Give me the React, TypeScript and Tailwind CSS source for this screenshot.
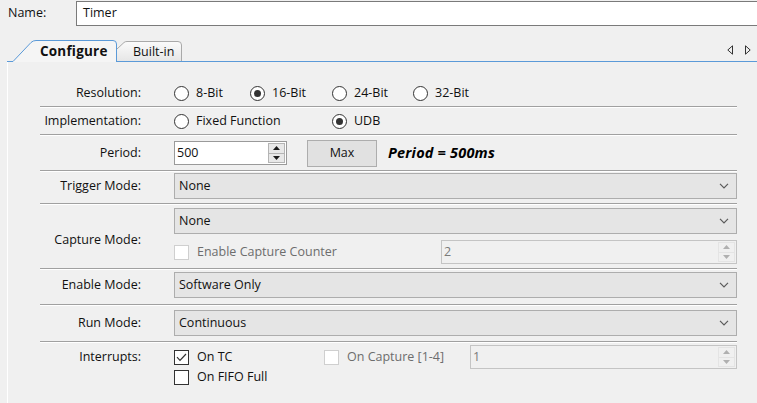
import type { ReactNode } from "react";

const Chevron = () => (
  <svg width="10" height="6" viewBox="0 0 10 6" className="shrink-0">
    <path d="M1 0.8 L5 4.8 L9 0.8" fill="none" stroke="#5a5a5a" strokeWidth="1.2" />
  </svg>
);

function Select({ value }: { value: string }) {
  return (
    <div className="flex h-[26px] w-full items-center justify-between border border-[#adadad] bg-[#e5e5e5] pl-[4px] pr-[7px]">
      <span>{value}</span>
      <Chevron />
    </div>
  );
}

function Radio({ checked, label, className = "" }: { checked?: boolean; label: string; className?: string }) {
  return (
    <div className={`flex items-center gap-[7px] ${className}`}>
      <span className="flex h-[15px] w-[15px] shrink-0 items-center justify-center rounded-full border border-[#333] bg-white">
        {checked && <span className="h-[7px] w-[7px] rounded-full bg-[#333]" />}
      </span>
      <span>{label}</span>
    </div>
  );
}

function Checkbox({ checked, disabled, label, className = "" }: { checked?: boolean; disabled?: boolean; label: string; className?: string }) {
  return (
    <div className={`flex items-center gap-[8px] ${className}`}>
      <span
        className={`flex h-[15px] w-[15px] shrink-0 items-center justify-center border bg-white ${
          disabled ? "border-[#cfcfcf]" : "border-[#333]"
        }`}
      >
        {checked && (
          <svg width="11" height="9" viewBox="0 0 11 9">
            <path d="M1 4.2 L4 7.3 L10 1" fill="none" stroke="#333" strokeWidth="1.2" />
          </svg>
        )}
      </span>
      <span className={disabled ? "text-[#6d6d6d]" : ""}>{label}</span>
    </div>
  );
}

function Spin({ disabled }: { disabled?: boolean }) {
  const fill = disabled ? "#b0b0b0" : "#1a1a1a";
  const box = disabled ? "border-[#e4e4e4] bg-[#f0f0f0]" : "border-[#b4b4b4] bg-[#e8e8e8]";
  return (
    <div className="flex h-full w-[17px] shrink-0 flex-col py-px">
      <div className={`flex flex-1 items-center justify-center border ${box}`}>
        <svg width="7" height="4" viewBox="0 0 7 4">
          <polygon points="0,4 3.5,0 7,4" fill={fill} />
        </svg>
      </div>
      <div className={`flex flex-1 items-center justify-center border border-t-0 ${box}`}>
        <svg width="7" height="4" viewBox="0 0 7 4">
          <polygon points="0,0 7,0 3.5,4" fill={fill} />
        </svg>
      </div>
    </div>
  );
}

function NumBox({ value, disabled, className = "" }: { value: string; disabled?: boolean; className?: string }) {
  return (
    <div
      className={`flex h-[24px] items-center justify-between border pl-[2px] pr-[1px] ${
        disabled ? "border-[#c4c4c4] bg-[#f0f0f0] text-[#7a7a7a]" : "border-[#9a9a9a] bg-white"
      } ${className}`}
    >
      <span>{value}</span>
      <Spin disabled={disabled} />
    </div>
  );
}

const Sep = () => <div className="h-0 border-t border-b border-t-[#a0a0a0] border-b-white" />;

function Row({ label, labelClass = "", className = "", children }: { label: string; labelClass?: string; className?: string; children: ReactNode }) {
  return (
    <div className={`flex ${className}`}>
      <div className={`flex w-[101px] shrink-0 items-center justify-end whitespace-nowrap ${labelClass}`}>{label}</div>
      <div className="ml-[33px] flex min-w-0 flex-1 flex-col">{children}</div>
    </div>
  );
}

export default function App() {
  return (
    <div className="h-[403px] w-[757px] overflow-hidden bg-[#f0f0f0] font-['Open_Sans',sans-serif] text-[12.5px] text-[#111]">
      {/* name */}
      <div className="flex h-[27px] items-center">
        <span className="w-[76px] shrink-0 pl-[8px]">Name:</span>
        <div className="flex h-[25px] flex-1 items-center border border-r-0 border-[#7a7a7a] bg-white pl-[6px]">Timer</div>
      </div>

      {/* tabs */}
      <div className="flex h-[35px] items-end">
        <div className="w-[7px] shrink-0" />
        <div className="relative flex h-[22px] w-[110px] shrink-0 items-center">
          <svg width="110" height="22" viewBox="0 0 110 22" className="absolute inset-0">
            <path d="M6 22 L24 2.5 Q26 0.5 29 0.5 L106 0.5 Q109.5 0.5 109.5 4 L109.5 22 Z" fill="#f5f5f5" />
            <path
              d="M0 21.5 L6 21.5 L24 2.5 Q26 0.5 29 0.5 L106 0.5 Q109.5 0.5 109.5 4 L109.5 22"
              fill="none"
              stroke="#5b9ad8"
            />
          </svg>
          <span className="relative ml-[33px] text-[13.5px] font-bold tracking-[0.2px]">Configure</span>
        </div>
        <div className="relative flex h-[22px] w-[65px] shrink-0 items-center">
          <svg width="65" height="22" viewBox="0 0 65 22" className="absolute inset-0">
            <defs>
              <linearGradient id="bt" x1="0" y1="0" x2="0" y2="1">
                <stop offset="0" stopColor="#fbfbfb" />
                <stop offset="1" stopColor="#e6e6e6" />
              </linearGradient>
            </defs>
            <path d="M0 9 L7 2.5 Q8 1.5 10 1.5 L61 1.5 Q64.5 1.5 64.5 5 L64.5 21 L0 21 Z" fill="url(#bt)" />
            <path d="M0 9 L7 2.5 Q8 1.5 10 1.5 L61 1.5 Q64.5 1.5 64.5 5 L64.5 21" fill="none" stroke="#a9a9a9" />
            <path d="M0 21.5 L65 21.5" stroke="#5b9ad8" />
          </svg>
          <span className="relative ml-[16px] mt-[2px]">Built-in</span>
        </div>
        <div className="flex h-[22px] flex-1 items-start justify-end gap-[12px] border-b border-[#5b9ad8] pr-[6px] pt-[5px]">
          <svg width="6" height="10" viewBox="0 0 6 10">
            <polygon points="5.5,0.8 5.5,9.2 0.8,5" fill="none" stroke="#333" />
          </svg>
          <svg width="6" height="10" viewBox="0 0 6 10">
            <polygon points="0.5,0.8 0.5,9.2 5.2,5" fill="none" stroke="#333" />
          </svg>
        </div>
      </div>

      {/* page */}
      <div className="ml-[7px] h-[341px] border-l border-white pt-[18px]">
        <div className="ml-[32px] w-[697px]">
          <Row label="Resolution:" className="h-[26px]">
            <div className="flex h-full items-center">
              <Radio label="8-Bit" className="w-[76px]" />
              <Radio label="16-Bit" checked className="w-[82px]" />
              <Radio label="24-Bit" className="w-[81px]" />
              <Radio label="32-Bit" />
            </div>
          </Row>
          <Sep />
          <Row label="Implementation:" className="h-[26px]">
            <div className="flex h-full items-center">
              <Radio label="Fixed Function" className="w-[158px]" />
              <Radio label="UDB" checked />
            </div>
          </Row>
          <Sep />
          <Row label="Period:" className="h-[34px]">
            <div className="flex h-full items-center">
              <NumBox value="500" className="w-[113px]" />
              <div className="ml-[20px] flex h-[27px] w-[70px] items-center justify-center border border-[#adadad] bg-[#e1e1e1]">
                Max
              </div>
              <span className="ml-[11px] text-[14.5px] font-bold italic tracking-[0.2px] text-black">Period = 500ms</span>
            </div>
          </Row>
          <Sep />
          <Row label="Trigger Mode:" labelClass="h-[26px]" className="h-[31px] pt-px">
            <Select value="None" />
          </Row>
          <Sep />
          <Row label="Capture Mode:" labelClass="pt-[4px]" className="h-[63px] pt-[3px]">
            <Select value="None" />
            <div className="mt-[6px] flex h-[24px] items-center">
              <Checkbox label="Enable Capture Counter" disabled className="w-[267px]" />
              <NumBox value="2" disabled className="flex-1" />
            </div>
          </Row>
          <Sep />
          <Row label="Enable Mode:" labelClass="h-[26px]" className="h-[34px] pt-[2px]">
            <Select value="Software Only" />
          </Row>
          <Sep />
          <Row label="Run Mode:" labelClass="h-[26px]" className="h-[35px] pt-[4px]">
            <Select value="Continuous" />
          </Row>
          <Sep />
          <Row label="Interrupts:" labelClass="h-[24px]" className="items-start pt-[2px]">
            <div className="flex h-[24px] items-center">
              <Checkbox label="On TC" checked className="w-[150px]" />
              <Checkbox label="On Capture [1-4]" disabled className="w-[146px]" />
              <NumBox value="1" disabled className="flex-1" />
            </div>
            <div className="flex h-[17px] items-center">
              <Checkbox label="On FIFO Full" />
            </div>
          </Row>
        </div>
      </div>
    </div>
  );
}
